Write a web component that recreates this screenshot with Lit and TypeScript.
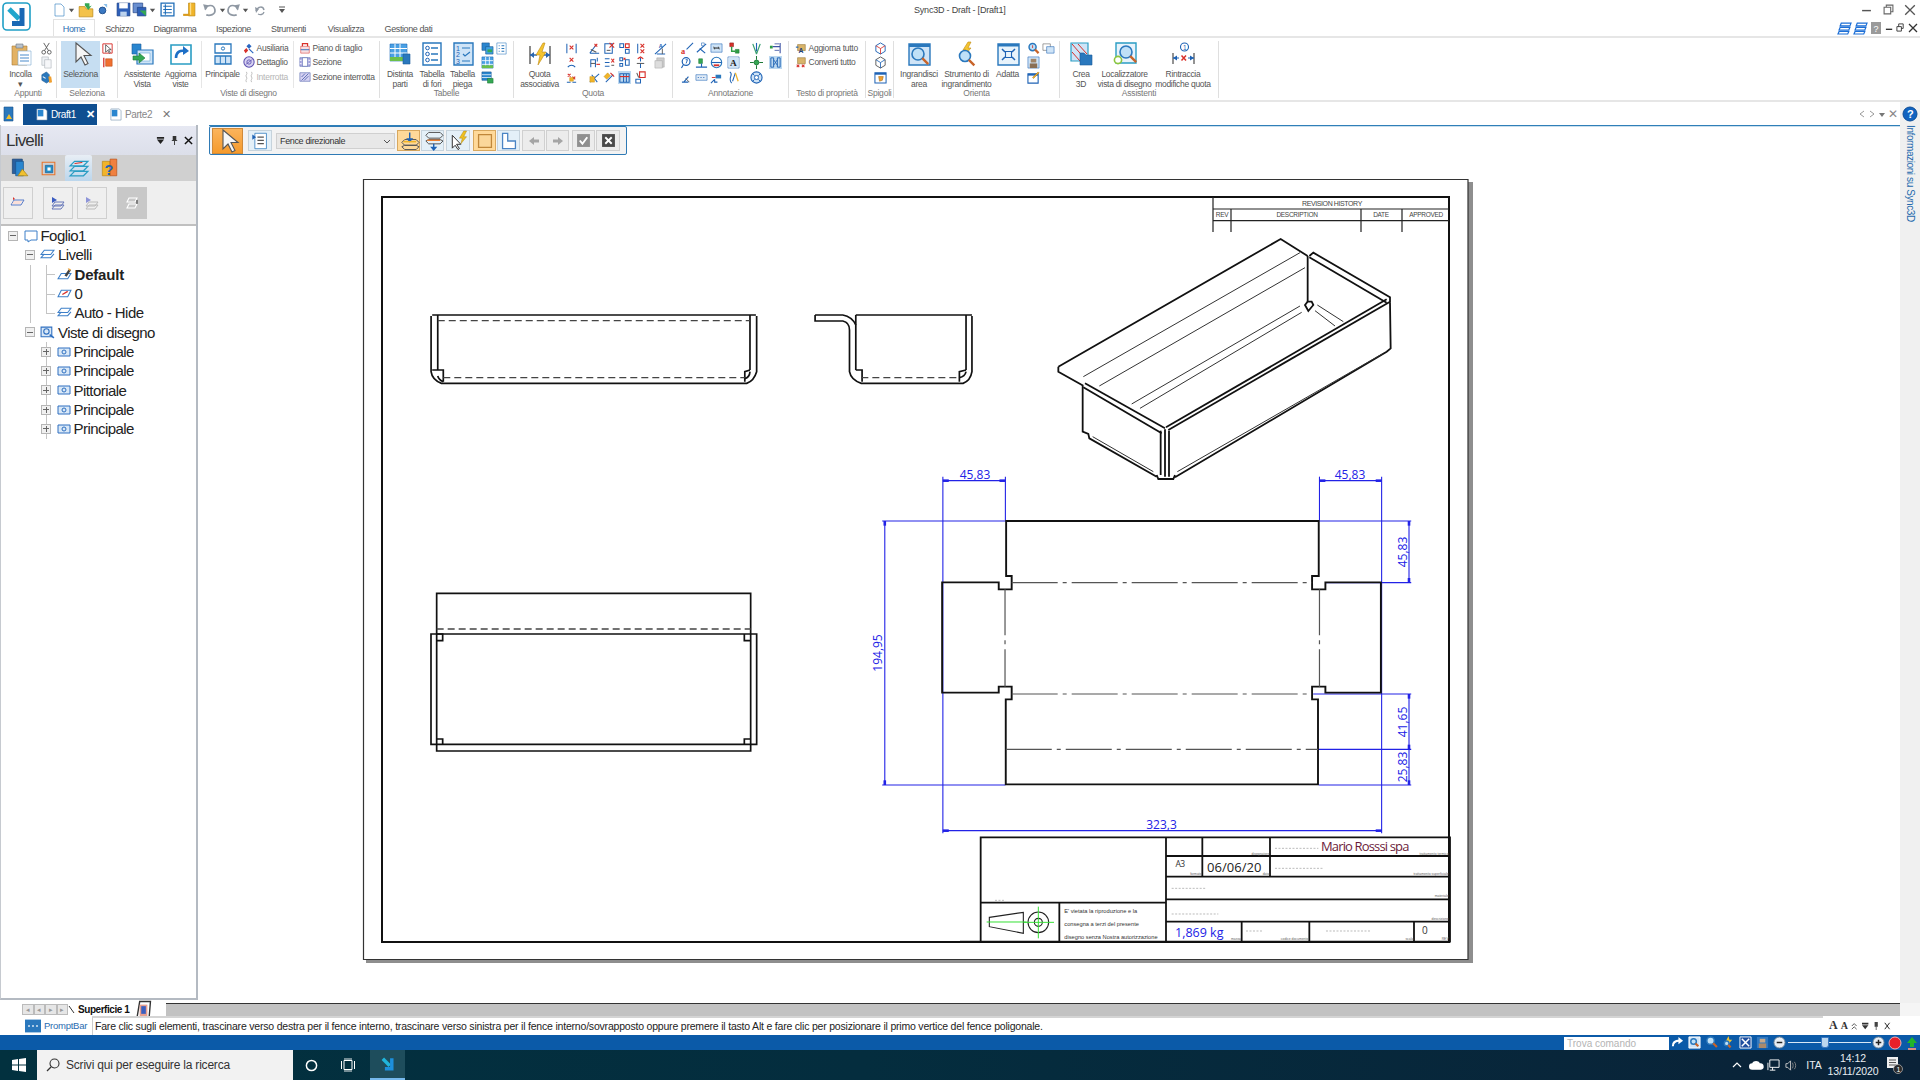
import { LitElement, html, css, svg } from 'lit';
import { customElement } from 'lit/decorators.js';

const B = '#1f63b5', R = '#d8302a', Y = '#f0b429', G = '#2f9e44', K = '#5a5a5a', LB = '#cfe4f7', W = '#ffffff', D = '#222222';
const st = (d: string, c = B, w = 1.1) => svg`<path d=${d} fill="none" stroke=${c} stroke-width=${w}/>`;
const fl = (d: string, c = B, s = 'none', w = 0.6) => svg`<path d=${d} fill=${c} stroke=${s} stroke-width=${w}/>`;
const ci = (x: number, y: number, r: number, f = 'none', s = B, w = 1) => svg`<circle cx=${x} cy=${y} r=${r} fill=${f} stroke=${s} stroke-width=${w}/>`;
const ic = (size: number, vb: number, parts: any) => html`<svg class="i" width=${size} height=${size} viewBox="0 0 ${vb} ${vb}">${parts}</svg>`;
const mag = (x: number, y: number, r: number) => [ci(x, y, r, '#bfe0f7', '#2a78bd', 1.6), st(`M${x + r * 0.7} ${y + r * 0.7}l${r} ${r}`, '#c8642a', 2.4)];

const BIG: Record<string, any> = {
  paste: [fl('M3 4h15v19H3z', '#e3b264', '#a97b35'), fl('M7 2h7v4H7z', '#b9c2cc', '#6d7680'), fl('M9 9h13v14H9z', W, '#7aa7d0'), st('M11 13h9M11 16h9M11 19h9', '#4a8ccc', 1.2)],
  cursor: [fl('M7 1l0 19 5-5 4 8 3-1.5-4-8h7z', '#f6f6f6', '#555', 1.1)],
  wizard: [fl('M2 2h9v10H2z', '#2a86cf', '#1b5d9c'), fl('M7 8h16v14H7z', LB, '#2a78bd', 1.2), fl('M10 11h10v8H10z', W, '#6aa7d8'), fl('M3 14h6v-3l6 5-6 5v-3H3z', '#35a853', '#1f7a38')],
  refresh: [fl('M2 3h20v19H2z', W, '#2a9dc4', 1.6), st('M7 16c0-6 4-8 9-7', '#1d6fc6', 2.6), fl('M14 4l6 5-6 4z', '#1d6fc6')],
  main: [fl('M4 2h16v9H4z', W, '#2a78bd', 1.3), ci(12, 6.5, 1.6, 'none', '#2a78bd', 1), fl('M4 14h16v8H4z', LB, '#2a78bd', 1.3), st('M9.3 14v8M14.6 14v8', '#2a78bd', 1)],
  bom: [fl('M2 2h17v17H2z', '#4aa0e4', '#1f6db8'), st('M2 6.5h17M2 11h17M7 2v17M12 2v17', W, 1), fl('M2 15h17v4H2z', '#6cc04a'), fl('M15 12h7v10h-7z', '#2a78bd', '#1b5d9c')],
  holes: [fl('M3 1h18v22H3z', W, '#2a78bd', 1.4), ci(7.5, 6, 1.8), ci(7.5, 12, 1.8), ci(7.5, 18, 1.8), st('M11 6h7M11 12h7M11 18h7', '#2a78bd', 1.4)],
  bend: [fl('M3 1h19v22H3z', '#cfe4f7', '#2a78bd', 1.4), svg`<text x="5" y="8.5" font-size="7" fill="#1f63b5" font-family="Liberation Sans">1</text><text x="5" y="15" font-size="7" fill="#1f63b5" font-family="Liberation Sans">2</text><text x="5" y="21.5" font-size="7" fill="#1f63b5" font-family="Liberation Sans">3</text>`, st('M11 6h8M12 12l2 2 5-4M11 19h8', '#2a78bd', 1.2)],
  assoc: [st('M2 4v18M22 4v18', K, 1.4), st('M2 13h7M15 13h7', '#2a66b0', 1.4), fl('M2 13l4-3v6zM22 13l-4-3v6z', '#2a66b0'), fl('M15 1L8 13h4l-2 10 8-13h-4l3-9z', '#f4c430', '#c08a10')],
  area: [fl('M2 2h21v21H2z', LB, '#2a78bd', 1.4), fl('M2 2h21v3H2z', '#2a78bd'), ...mag(11, 12, 6)],
  tool: [fl('M13 0L8 8h3l-2 6 7-8h-3l3-6z', '#f4c430', '#c08a10'), ...mag(10, 14, 5.5)],
  fit: [fl('M2 2h21v21H2z', '#e8f3fb', '#2a78bd', 1.4), fl('M2 2h21v2.5H2z', '#2a78bd'), st('M6 7l3 3M19 7l-3 3M6 18l3-3M19 18l-3-3', '#1f63b5', 1.5), fl('M9.5 9.5h6v6h-6z', 'none', '#1f63b5', 1.1)],
  c3d: [fl('M2 1h17v18H2z', LB, '#2a9dc4', 1.2), st('M3 2l14 16M3 10l8 9M9 2l9 10', R, 1), fl('M11 11h4l2 2h6v10H11z', '#2a78bd', '#1b5d9c')],
  locate: [fl('M3 1h20v20H3z', '#e8f3fb', '#2a9dc4', 1.4), ...mag(13, 10, 6), ci(5, 18, 3.6, W, '#8cc63f', 1.6)],
  retrace: [ci(13.5, 5, 4, W, '#1f63b5', 1.1), svg`<text x="12" y="7.6" font-size="6.5" fill="#1f63b5" font-family="Liberation Sans">1</text>`, st('M2 11v11M23 11v11', K, 1.3), st('M2 16h6M17 16h6', B, 1.2), fl('M2 16l4-2.5v5zM23 16l-4-2.5v5z', B), st('M10.5 13.5l4.5 5M15 13.5l-4.5 5', R, 1.5)],
};

const tri = (b = '', r = '', y = '', k = '') => [b ? st(b, B) : '', r ? st(r, R, 1.2) : '', y ? fl(y, Y, '#b98512', 0.4) : '', k ? st(k, K) : ''];
const SM: Record<string, any> = {
  cut: [st('M4 1l5 8M10 1L5 9', K, 1), ci(4, 11, 2, 'none', K), ci(10, 11, 2, 'none', K)],
  copy: [fl('M2 1h7v9H2z', '#eef1f4', '#a7adb5'), fl('M5 4h7v9H5z', '#f6f7f9', '#a7adb5')],
  brush: [fl('M2 4l5-3 3 3v7l-3 2-5-3z', '#2a78bd', '#17538c'), fl('M9 6h3l1 6-3 1z', '#f0a030'), st('M3 6l3 2', W)],
  selA: [st('M2 2h10v10H2z', R, 1), fl('M5 3l0 8 2-2 2 3 1-.7-2-3h3z', W, D, 0.7)],
  selB: [st('M3 2v10', R, 1.4), fl('M5 3h7v8H5z', '#f07030', '#b84a16')],
  aux: [fl('M4 5l3-3 3 3-3 3z', '#2a66c0'), fl('M1 10l3-3 2 3-3 3z', R), st('M7 8l5 5', '#2a66c0', 1.4)],
  det: [ci(7, 7, 6, '#d9d4f2', '#5b4fb0', 1.2), ci(7, 7, 2.5, 'none', '#5b4fb0', 1), st('M3 10l8-6', '#5b4fb0', .8)],
  brk: [st('M4 1c2 3-2 4 0 6s-2 3 0 6M10 1c2 3-2 4 0 6s-2 3 0 6', '#b5b5b5', 1)],
  plane: [fl('M2 5h10v8H2z', '#f6dfe2', R), st('M4 5V2h6v3', R, 1.4), st('M2 9h10', B, 1)],
  sect: [fl('M1 2h12v10H1z', '#b5b1e6', '#3f55a5'), fl('M4 2h6v10H4z', W, '#3f55a5'), st('M1 5h2M1 9h2M11 5h2M11 9h2', W)],
  brsec: [fl('M1 2h12v10H1z', '#d6d2f2', '#3f55a5'), st('M3 11l8-8M6 11l5-5M3 7l4-4', '#3f55a5', .9)],
  t1: [fl('M1 1h8v8H1z', '#2a86cf', '#17538c'), fl('M5 5h8v8H5z', '#3fa0e0', '#17538c'), fl('M7 8l5 0 0 3-5 0z', '#35a853')],
  t2: [fl('M2 1h10v12H2z', W, '#2a78bd'), st('M4 4h1M7 4h3M4 7h1M7 7h3M4 10h1M7 10h3', '#2a78bd', 1.1)],
  t3: [fl('M1 1h12v12H1z', '#4aa0e4', '#1f6db8'), st('M1 5h12M1 9h12M5 1v12M9 1v12', W, .9), fl('M1 10h12v3H1z', '#6cc04a')],
  t4: [fl('M1 1h10v9H1z', '#2a86cf', '#17538c'), st('M1 4h10M1 7h10', W, .8), fl('M7 8h6v5H7z', '#35a853', '#1f7a38')],
  q1: tri('M2 2v10M12 2v10', 'M5 4l4 4M9 4L5 8'),
  q2: tri('M3 12a5 5 0 0 1 8 0', 'M5 2l4 4M9 2L5 6'),
  q3: tri('M2 12h4M8 12h4', 'M3 3l3 3M6 3L3 6M8 6l3 3M11 6L8 9', 'M5 7h4v4H5z'),
  q4: tri('M2 12h10M2 12L8 4', 'M7 2l3 3M10 2L7 5', '', 'M3 8l6 3'),
  q5: tri('M3 12V4h5v8M10 2v4', 'M9 9h4', '', 'M3 8h5'),
  q6: tri('M2 12L12 3M4 4l6 8', '', 'M2 6l5 0 0 6-5 0z'),
  q7: tri('M2 2h8v10H2z', 'M7 1l5 5M12 1L7 6', '', 'M4 9h4'),
  q8: tri('M2 3h5M2 7h5M2 11h5', 'M9 3l3 4M12 3L9 7', '', 'M9 10h3'),
  q9: tri('M3 12L11 4', 'M8 2l4 4', 'M1 6l4-4 3 3-4 4z'),
  q10: tri('M2 2h4v4H2zM8 8h4v4H8z', 'M8 2h4v4H8z'),
  q11: tri('M2 2h3v3H2zM2 8h3v3H2zM8 4h4v6H8z', 'M6 2l2 2M8 2L6 4'),
  q12: [fl('M0 0h14v14H0z', '#bcd8f0'), ...tri('M2 3h10v9H2zM6 3v9M9 3v9', 'M2 6h10')],
  q13: tri('M4 2v10', 'M7 2l4 4M11 2L7 6M7 8l4 4M11 8l-4 4'),
  q14: tri('M2 9h5v4H2z', 'M6 1h6v6H6z', '', 'M3 2l2 5'),
  q16: tri('M7 2v4M7 8v5', 'M4 3l3-2 3 2', '', 'M3 8h8'),
  aa: [svg`<text x="5" y="6" font-size="6" fill="#1f63b5" font-family="Liberation Sans" font-weight="700">A</text>`, st('M1 13L13 2M3 13h9', B, 1.1), st('M9 7v6', K, 1)],
  ab: [fl('M3 2h8v10H3z', '#ccc', '#aaa'), fl('M1 5h8v8H1z', '#ddd', '#aaa')],
  a1: [svg`<text x="0" y="13" font-size="9" fill="#d8302a" font-family="Liberation Serif" font-weight="700">a</text>`, st('M6 8l7-7', B, 1.2)],
  a2: [ci(5.5, 6, 4.2, W, B, 1.3), st('M2.5 9.5L0.5 13', B, 1.2), st('M5 4h2l-1.5 4', B, 1)],
  a3: [st('M1 12h7M3 12l5-6', B, 1.2), st('M5 8l4 4', K, 1)],
  a4: [st('M2 11L12 2M5 7l6 5', B, 1.2), fl('M7 1h3v3H7z', W, B)],
  a5: [fl('M4 3h4v5H4z', '#35a853', '#1f7a38'), st('M1 12h12M7 8v4', B, 1.2)],
  a6: [st('M1 13l4-4M5 9v3h3', B, 1.2), fl('M6 4l6 0 0 4-6 0z', '#2a78bd'), st('M2 7h4', R, 1)],
  a7: [fl('M1 2h12v9H1z', LB, B), st('M4 6.5h6', D, 1.1), st('M4 5l1 3M9 5l1 3', D, .7)],
  a8: [ci(7, 7, 5.6, W, '#2a78bd', 1.2), st('M1.5 7h11', B, 1.2), fl('M4 9h6v2H4z', R)],
  a9: [fl('M1 4h12v6H1z', '#dfeaf6', B), st('M3 7h1M6 7h1M9 7h1', B, 1.2)],
  a10: [fl('M3 1h4v4H3z', R, '#8e1e1a'), st('M5 5v5h4', G, 1.5), fl('M9 8h4v4H9z', G, '#1f7a38')],
  a11: [fl('M1 1h12v12H1z', W, B), fl('M2 2h10v10H2z', LB), svg`<text x="3.2" y="11" font-size="10" fill="#222" font-family="Liberation Serif" font-weight="700">A</text>`],
  a12: [st('M3 2l4 11M11 2l-4 11', '#3aa070', 1.3), st('M7 1v9', B, 1.2)],
  a13: [ci(7, 7, 2.6, '#35a853', '#1f7a38'), st('M7 0v4M7 10v4M0 7h4M10 7h4', '#1f7a38', 1.1)],
  a14: [st('M3 1c5 3-3 6 2 12M9 2l-3 9', B, 1.1), st('M9 2l3 9', Y, 1.4)],
  a15: [ci(7, 7, 6, LB, B, 1.2), ci(7, 7, 2.2, W, B, 1), st('M3 3l2 2M11 3L9 5M3 11l2-2M11 11L9 9', B, 1)],
  a16: [fl('M1 4h3v3H1z', G), st('M4 5h8M12 1v11', '#3f55a5', 1.2), st('M6 2h5M6 9h5', '#3f55a5', .9)],
  a17: [fl('M0 0h14v14H0z', '#bcd8f0'), st('M2 2h3v10H2zM9 2h3v10H9z', '#1f63b5', 1), st('M5 4l4 6M9 4l-4 6', '#1f63b5', .9)],
  p1: [fl('M3 3h9v7H3z', '#d9b46a', '#8c6a28'), svg`<text x="4" y="13" font-size="8" fill="#1f3f78" font-family="Liberation Sans" font-weight="700">A</text>`, st('M1 6h3', B, 1.3)],
  p2: [fl('M3 2h9v7H3z', '#d9b46a', '#8c6a28'), st('M2 10l3 3M5 10l-3 3', R, 1.2), st('M8 10l3 3M11 10l-3 3', R, 1.2)],
  e1: [st('M7 1l5 3v6l-5 3-5-3V4z', B, 1), st('M2 4l5 3 5-3M7 7v6', R, .9)],
  e2: [st('M7 1l5 3v6l-5 3-5-3V4z', K, 1), st('M2 4l5 3 5-3M7 7v6', B, .9)],
  e3: [fl('M1 2h12v11H1z', W, B, 1.1), fl('M1 2h12v2H1z', B), fl('M5 6l5 0-1 4-3 1z', '#f0a030', '#a86a10')],
  o1: [...mag(6, 5.5, 3.8), st('M6 3.5v3', R, .9)],
  o2: [fl('M1 2h8v7H1z', W, K), fl('M5 5h8v7H5z', LB, B)],
  o3: [fl('M1 1h12v12H1z', LB, B), fl('M4 3h6v4H4z', '#a08468'), fl('M3 8h8v5H3z', '#8a6f55')],
  o4: [fl('M1 3h11v10H1z', W, B, 1.2), fl('M1 3h11v2H1z', B), fl('M6 7l6-6 1 1-6 6z', Y, '#a86a10')],
};

type Col = any;
const big = (w: number, icon: string, lines: string[], sel = false, s = 24) => ({ t: 'big', w, icon, lines, sel, s });
const sm = (w: number, ...icons: string[]) => ({ t: 'small', w, icons });
const list = (w: number, items: any[], pad = 0) => ({ t: 'list', w, items, pad });
const sp = (w: number, line = false) => ({ t: 'sp', w, line });

const GROUPS: { w: number; label: string; cols: Col[] }[] = [
  { w: 57, label: 'Appunti', cols: [sp(2), big(37, 'paste', ['Incolla', '▾']), sm(14, 'cut', 'copy', 'brush')] },
  { w: 61, label: 'Seleziona', cols: [sp(4), big(39, 'cursor', ['Seleziona'], true), sm(14, 'selA', 'selB')] },
  {
    w: 262, label: 'Viste di disegno', cols: [
      big(48, 'wizard', ['Assistente', 'Vista']), big(29, 'refresh', ['Aggiorna', 'viste']), sp(7, true),
      big(41, 'main', ['Principale']),
      list(50, [['aux', 'Ausiliaria'], ['det', 'Dettaglio'], ['brk', 'Interrotta', true]]),
      sp(1, true), list(86, [['plane', 'Piano di taglio'], ['sect', 'Sezione'], ['brsec', 'Sezione interrotta']], 5),
    ],
  },
  { w: 134, label: 'Tabelle', cols: [big(40, 'bom', ['Distinta', 'parti']), big(24, 'holes', ['Tabella', 'di fori']), big(37, 'bend', ['Tabella', 'piega']), sm(13, 't1', 't3', 't4'), sm(14, 't2')] },
  {
    w: 159, label: 'Quota', cols: [
      big(51, 'assoc', ['Quota', 'associativa']), sm(13, 'q1', 'q2', 'q3'), sp(8), sm(16, 'q4', 'q5', 'q6'),
      sm(15, 'q7', 'q8', 'q9'), sm(15, 'q10', 'q11', 'q12'), sm(17, 'q13', 'q16', 'q14'), sm(23, 'aa', 'ab'),
    ],
  },
  {
    w: 116, label: 'Annotazione', cols: [
      sp(6), sm(16, 'a1', 'a2', 'a3'), sm(13, 'a4', 'a5', 'a9'), sm(17, 'a7', 'a8', 'a6'), sm(16, 'a10', 'a11', 'a14'),
      sp(5), sm(20, 'a12', 'a13', 'a15'), sm(19, 'a16', 'a17'),
    ],
  },
  { w: 77, label: 'Testo di proprietà', cols: [list(76, [['p1', 'Aggiorna tutto'], ['p2', 'Converti tutto']], 6)] },
  { w: 28, label: 'Spigoli', cols: [sp(7), sm(14, 'e1', 'e2', 'e3')] },
  {
    w: 166, label: 'Orienta', cols: [
      big(50, 'area', ['Ingrandisci', 'area']), big(45, 'tool', ['Strumento di', 'ingrandimento']), big(37, 'fit', ['Adatta']),
      sm(15, 'o1', 'o3', 'o4'), sm(15, 'o2'),
    ],
  },
  { w: 159, label: 'Assistenti', cols: [big(42, 'c3d', ['Crea', '3D']), big(45, 'locate', ['Localizzatore', 'vista di disegno']), big(72, 'retrace', ['Rintraccia', 'modifiche quota'])] },
];

const TABS: [string, number][] = [['Schizzo', 49], ['Diagramma', 62], ['Ispezione', 55], ['Strumenti', 55], ['Visualizza', 60], ['Gestione dati', 65]];
const caret = ic(7, 8, fl('M1 3h6L4 7z', '#555'));
const QAT: [number, any][] = [
  [12, ic(14, 14, fl('M3 1h6l3 3v9H3z', W, '#2a78bd'))], [12, caret],
  [18, ic(16, 14, [fl('M1 4h5l1 2h6v7H1z', '#f3c24a', '#b98512'), fl('M6 1h4v3l2-1-3 4-3-4h0z', '#35a853')])],
  [14, ic(13, 14, [ci(7, 8, 3.6, '#3a78c2', '#1f4f8c'), fl('M8 1l4 0 0 4z', '#8cc0ea')])], [6, ''],
  [16, ic(15, 14, [fl('M1 1h12v12H1z', '#2d5fb8', '#1c3f80'), fl('M3 1h8v5H3z', W), fl('M4 9h6v4H4z', '#bcd3ee')])],
  [16, ic(15, 14, [fl('M1 1h9v9H1z', '#6a8fd0', '#1c3f80'), fl('M5 5h8v8H5z', '#2d5fb8', '#1c3f80'), fl('M7 8l6 0 0 5z', '#35a853')])], [10, caret],
  [20, ic(15, 14, [fl('M1 1h12v12H1z', W, '#1f6db8', 1.2), st('M3 4h8M3 7h8M3 10h8M5 2v10', '#1f6db8', 1)])],
  [22, ic(15, 14, [fl('M7 1h6v12H7z', '#f0b429', '#b98512'), fl('M2 11h6v2H2z', '#d99a1c'), st('M9 1v11', '#fde29a', 1)])],
  [20, ic(15, 14, [st('M3 7c2-5 8-5 9 0s-5 6-8 5', '#8f98a3', 1.6), fl('M1 2l5 1-3 5z', '#8f98a3')])], [6, caret],
  [16, ic(15, 14, [st('M11 7C9 2 3 2 2 7s5 6 8 5', '#8f98a3', 1.6), fl('M13 2l-5 1 3 5z', '#8f98a3')])], [8, caret],
  [22, ic(14, 14, [st('M3 8c2-5 7-5 8-1', '#8f98a3', 1.5), st('M5 11c2 1 5 1 6-2', '#8f98a3', 1.3), fl('M2 4l4 2-3 4z', '#8f98a3')])], [22, ic(8, 8, [st('M1 1h6', '#555', 1), fl('M1 3h6L4 7z', '#555')])],
];
const WIN1: [number, any][] = [
  [22, ic(11, 10, st('M1 6h8', '#555', 1.3))],
  [22, ic(11, 10, st('M1 3h6v6H1zM3 3V1h6v6H7', '#666', 1))],
  [21, ic(12, 10, st('M1 1l8 8M9 1L1 9', '#555', 1.1))],
];
const stack = [st('M3 2h9l-1 2.5H2zM2 5.8h9l-1 2.5H1zM1 9.6h9L9 12H0z', '#1d6fd6', 1.1)];
const WIN2: [number, any][] = [
  [16, ic(13, 12, stack)], [16, ic(13, 12, stack)],
  [15, ic(12, 12, [fl('M1 0h10v12H1z', '#9a9a9a'), svg`<text x="3.5" y="9.5" font-size="9" fill="#fff" font-family="Liberation Sans">?</text>`])],
  [12, ic(9, 10, st('M1 7h7', '#333', 1.5))],
  [11, ic(9, 10, st('M1 4h5v5H1zM3 4V1h5v5H6', '#333', 1))],
  [14, ic(10, 10, st('M1 1l8 8M9 1L1 9', '#333', 1.3))],
];

const doc = (a: string) => [fl('M2 1h9l2 2v10H2z', W, '#6d8ca8'), fl('M3 2h6v7H3z', a)];
const TI: Record<string, any> = {
  sheet: ic(14, 14, [fl('M1 2h12v9H7l-3 2v-2H1z', W, '#3d7fc8', 1)]),
  layer: ic(15, 14, [st('M4 3h9l-3 4H1zM4 6.5L1 10h9l3-3.5', '#3d7fc8', 1)]),
  pen: ic(15, 14, [st('M4 6h9l-3 5H1z', '#3d7fc8', 1), fl('M7 8l4-6 2 1-4 6z', '#444'), fl('M10 1l3 1-1 2z', '#f0a030')]),
  red: ic(15, 14, [st('M4 4h9l-3 6H1z', '#3d7fc8', 1), st('M5 8l5-3', R, 1.2)]),
  view: ic(14, 14, [fl('M1 3h12v8H1z', '#d9e8f7', '#2e6fc0', 1), ci(7, 7, 2, 'none', '#2e6fc0', 1)]),
  views: ic(15, 14, [fl('M1 2h10v9H1z', '#d9e8f7', '#2e6fc0', 1), ci(6, 6, 2.5, 'none', '#2e6fc0', 1), st('M9 9l4 3', '#2e6fc0', 1.4)]),
};

const FENCE: any[] = [
  ['sel2', 31, ic(24, 24, BIG.cursor), 'on'],
  ['g', 5], ['b', 24, ic(18, 14, [fl('M3 1h9v12H3z', W, '#2a78bd'), st('M5 4h5M5 6.5h5M5 9h5', '#555', .9), fl('M1 2l3 2-3 2z', '#1f63b5')])],
  ['g', 4], ['c', 119], ['g', 2],
  ['b', 23, ic(20, 14, [st('M2 8l2-2h8l2 2-2 2H4zM2 11l2-1h8l2 1-2 2H4z', '#555', .7), fl('M7 1h1v4h2L7.5 8 5 5h2z', '#1f63b5'), fl('M3 7h9v1H3z', Y)]), 'soft'], ['g', 1],
  ['b', 23, ic(20, 14, [st('M2 3l2-2h8l2 2-2 2H4zM2 7l2-1h8l2 1-2 2H4z', '#555', .7), fl('M7 9h1v2h2l-2.5 3L5 11h2z', '#1f63b5'), fl('M3 6h9v1H3z', '#f08030')])], ['g', 2],
  ['b', 24, ic(20, 14, [fl('M3 3v9l2-2 2 3 1-.7-2-3h3z', W, '#333', .7), fl('M11 0l-3 5h2l-1 4 4-5h-2l2-4z', '#f0c020', '#a07c10', .3)])], ['g', 3],
  ['b', 23, ic(18, 14, [fl('M2 2h10v10H2z', '#fbd79a', '#c0873a', 1)]), 'soft'], ['g', 1],
  ['b', 23, ic(18, 14, [fl('M2 1h4v6h6v6H2z', W, '#4a84c4', 1)])], ['g', 2],
  ['b', 23, ic(14, 14, fl('M2 7l5-4v2.5h5v3H7V11z', '#a5a5a5')), 'off'], ['g', 1],
  ['b', 23, ic(14, 14, fl('M12 7L7 3v2.5H2v3h5V11z', '#a5a5a5')), 'off'], ['g', 3],
  ['b', 23, ic(15, 14, [fl('M1 1h12v12H1z', '#8f8f8f'), st('M3.5 7l2.5 3 4.5-6', W, 1.8)]), 'off'], ['g', 1],
  ['b', 24, ic(15, 14, [fl('M1 1h12v12H1z', '#4a4a4a'), st('M4 4l6 6M10 4l-6 6', W, 1.8)]), 'off'],
];

const ISO_H = ['M55 560L722 177L803 228', 'M803 228V365', 'M803 365L795 375L805 393L820 375L815 365Z', 'M808 228L820 218L1050 352V368', 'M808 232L1040 368', 'M1050 365L385 750', 'M1040 358L378 742', 'M1050 368L1052 505L1040 515L405 892', 'M55 560V575L130 617', 'M135 610L375 745', 'M130 622L365 760', 'M128 617V755L145 762L148 775L350 890', 'M362 752V885', 'M375 748V890', 'M387 752V890', 'M350 885L355 897H400L405 885'];
const ISO_L = ['M130 590L780 218', 'M178 618L795 263', 'M275 672L780 378', 'M300 685L785 397', 'M832 375L910 425', 'M825 392L885 438', 'M158 770L340 875', 'M412 875L1030 520'];
const FLAT = 'M395 183H1240V348H1222V388H1258V367H1408V698H1258V680H1222V718H1238V973H394V718H410V680H375V698H222V367H375V388H410V348H395Z';
const CENTER = ['M410 368H1222', 'M410 702H1222', 'M394 868H1238', 'M392 388V680', 'M1242 388V680'];
const DIM = ['M224 50V1120', 'M393 50V180', 'M224 62H393', 'M1242 50V180', 'M1410 50V1120', 'M1242 62H1410', 'M60 183H395', 'M60 975H393', 'M67 183V975', 'M1240 183H1490', 'M1258 368H1490', 'M1484 183V368', 'M1225 702H1490', 'M1240 868H1490', 'M1240 975H1490', 'M1484 702V975', 'M224 1112H1410'];
const DIM_A = [[224, 62, 1, 0], [393, 62, -1, 0], [1242, 62, 1, 0], [1410, 62, -1, 0], [67, 183, 0, 1], [67, 975, 0, -1], [1484, 183, 0, 1], [1484, 368, 0, -1], [1484, 702, 0, 1], [1484, 868, 0, -1], [1484, 975, 0, -1], [224, 1112, 1, 0], [1410, 1112, -1, 0]];
const SIDE = ['M60 75H935', 'M57 78V245Q60 270 85 280H910Q930 272 937 245V78', 'M75 75V240', 'M919 75V240', 'M60 240H90V275', 'M919 240L905 245V275', 'M75 258Q78 270 90 275', 'M919 245Q918 262 905 266', 'M1095 75H1170Q1195 80 1205 105', 'M1095 75V93H1170Q1188 97 1188 120V245Q1192 270 1220 280H1495Q1515 272 1519 245V78', 'M1205 75H1519', 'M1205 75V240', 'M1503 75V240', 'M1205 240H1222V275', 'M1503 240L1485 245V275', 'M1503 245Q1500 260 1485 263'];
const BOTTOM = ['M50 40H992V513H50Z', 'M33 162H1010V493H33Z', 'M50 162H68V182H50', 'M973 162V182H992', 'M50 477H68V493', 'M973 493V477H992'];
const TB_H = ['M62 248H618', 'M618 108H1470', 'M618 170H1470', 'M618 238H1470', 'M618 305H1470', 'M618 52V365', 'M727 52V170', 'M930 52V170', 'M298 248V365', 'M845 305V365', 'M1048 305V365', 'M1362 305V365', 'M62 52H1470V365H62Z', 'M0 365H62'];
const TB_DOT = ['M945 85H1075', 'M945 145H1090', 'M635 205H740', 'M635 282H775', 'M858 333H908', 'M1098 333H1230', 'M105 241H132'];
const TB_LAB: [number, number, string][] = [[928, 105, 'disegnatore'], [1466, 105, 'trattamento termico'], [725, 166, 'formato'], [928, 166, 'data'], [1466, 166, 'trattamento superficiale'], [1466, 232, 'materiale'], [1466, 300, 'descrizione'], [843, 361, 'massa'], [1045, 361, 'codice documento'], [1360, 361, 'scala'], [1466, 361, 'REV']];

@customElement('app-root')
export class AppRoot extends LitElement {
  static styles = css`
    :host { display: block; width: 1920px; height: 1080px; overflow: hidden; background: #fff; font-family: "Liberation Sans", Arial, sans-serif; color: #444; }
    .app { display: flex; flex-direction: column; width: 1920px; height: 1080px; }
    svg.i { display: block; flex: none; overflow: visible; }
    .top { display: grid; grid-template-columns: 53px 1fr; height: 36px; }
    .logo { padding: 2px 0 0 2px; }
    .toprows { display: flex; flex-direction: column; min-width: 0; }
    .row1 { display: flex; align-items: center; height: 19px; }
    .cell { display: flex; align-items: center; justify-content: center; flex: none; }
    .title { margin-left: 621px; font-size: 9px; letter-spacing: -.2px; color: #444; white-space: nowrap; }
    .ctrl { display: flex; margin-left: auto; }
    .row2 { display: flex; align-items: stretch; height: 17px; }
    .tab { display: flex; align-items: center; justify-content: center; flex: none; font-size: 9px; letter-spacing: -.4px; color: #555; padding-top: 2px; box-sizing: border-box; }
    .tab.on { color: #2a6db0; background: #fff; border: 1px solid #e2e2e2; border-bottom: 0; }
    .ribbon { display: flex; flex: none; height: 66px; border-top: 2px solid #e6e6e6; border-bottom: 2px solid #e6e6e6; padding-top: 3px; box-sizing: border-box; }
    .group { display: flex; flex-direction: column; flex: none; box-sizing: border-box; height: 57px; border-right: 1px solid #dfdfdf; }
    .cols { display: flex; height: 47px; }
    .glabel { height: 10px; line-height: 10px; font-size: 8.5px; letter-spacing: -.2px; color: #777; text-align: center; white-space: nowrap; }
    .big { display: flex; flex-direction: column; align-items: center; flex: none; padding-top: 1px; box-sizing: border-box; font-size: 8.5px; letter-spacing: -.3px; line-height: 10px; color: #555; white-space: nowrap; }
    .big.sel { background: #c6def2; }
    .big .tx { margin-top: 3px; display: flex; flex-direction: column; align-items: center; }
    .small { display: flex; flex-direction: column; align-items: center; flex: none; }
    .small .r { height: 14.5px; display: flex; align-items: center; }
    .list { display: flex; flex-direction: column; flex: none; box-sizing: border-box; font-size: 8.5px; letter-spacing: -.25px; color: #555; white-space: nowrap; }
    .list .r { height: 14.3px; display: flex; align-items: center; gap: 1.5px; }
    .list .dim { color: #b5b5b5; }
    .vsep { border-right: 1px solid #e6e6e6; box-sizing: border-box; height: 47px; flex: none; }
    .doctabs { display: flex; align-items: stretch; height: 23px; flex: none; }
    .dicon { width: 23px; display: flex; align-items: center; padding-left: 2px; box-sizing: border-box; flex: none; }
    .dtab { display: flex; align-items: center; flex: none; box-sizing: border-box; font-size: 10px; letter-spacing: -.4px; gap: 3px; }
    .dtab.on { width: 74px; background: #0f4f91; color: #fff; padding-left: 12px; margin-top: 2px; }
    .dtab.off { width: 75px; color: #888; padding-left: 12px; margin-top: 2px; }
    .dx { font-size: 11px; font-weight: 700; margin-left: 7px; letter-spacing: 0; }
    .dtab.off .dx { font-weight: 400; color: #777; margin-left: 7px; }
    .dright { display: flex; align-items: center; margin-left: auto; gap: 2px; color: #888; font-size: 12px; padding-right: 2px; }
    .helpc { width: 20px; background: #f0f0f0; display: flex; align-items: center; justify-content: center; flex: none; }
    .work { display: flex; height: 878px; flex: none; }
    .panel { width: 198px; flex: none; display: flex; flex-direction: column; height: 875px; box-sizing: border-box; border-right: 2px solid #b4bac2; border-bottom: 2px solid #b4bac2; border-left: 1px solid #c6cad0; background: #fff; }
    .phead { height: 29px; display: flex; align-items: center; background: linear-gradient(#e6e8f2, #dcdfea); padding-left: 5px; font-size: 17px; letter-spacing: -.8px; color: #333; flex: none; margin-top: 1px; }
    .pctl { margin-left: auto; display: flex; gap: 5px; padding-right: 3px; align-items: center; }
    .ptabs { height: 26px; background: #d0d0d0; display: flex; align-items: center; flex: none; padding-left: 4px; }
    .ptab { width: 27px; height: 26px; display: flex; align-items: center; justify-content: center; flex: none; margin-right: 3px; }
    .ptab.on { background: linear-gradient(#e8eef5, #bcd6ec); border-radius: 2px 2px 0 0; }
    .ptools { height: 43px; background: #efefef; display: flex; align-items: center; gap: 4px; padding-left: 2px; flex: none; border-bottom: 2px solid #c0c0c0; }
    .ptool { width: 30px; height: 32px; border: 1px solid #cfcfcf; box-sizing: border-box; display: flex; align-items: center; justify-content: center; flex: none; }
    .ptool.g { background: #c8c8c8; margin-left: 6px; }
    .ptool.s { margin-right: 6px; }
    .tree { flex: 1; padding: 0 0 0 4px; font-size: 15px; letter-spacing: -.55px; color: #222; background: #fff; }
    .tr { height: 19.33px; display: flex; align-items: center; white-space: nowrap; }
    .cw { width: 16.5px; height: 100%; flex: none; position: relative; display: flex; align-items: center; justify-content: center; }
    .cw.v::before, .cw.l::before, .cw.e::before, .cw.xv::before { content: ""; position: absolute; left: 8px; top: 0; bottom: 0; border-left: 1px solid #c4c4c4; }
    .cw.e::before { bottom: 50%; }
    .cw.l::after, .cw.e::after { content: ""; position: absolute; left: 8px; right: 0; top: 50%; border-top: 1px solid #c4c4c4; }
    .box { width: 10px; height: 10px; border: 1px solid #b5b5b5; background: #f0f0f0; box-sizing: border-box; position: relative; z-index: 1; display: flex; align-items: center; justify-content: center; }
    .box::before { content: ""; width: 6px; border-top: 1px solid #666; position: absolute; }
    .box.p::after { content: ""; height: 6px; border-left: 1px solid #666; position: absolute; }
    .tr .ti { margin-left: 2px; margin-right: 3px; flex: none; }
    .tr b { letter-spacing: -.2px; }
    .canvas { flex: 1; position: relative; min-width: 0; }
    .draw { display: block; }
    .draw * { vector-effect: non-scaling-stroke; }
    .fence { position: absolute; left: 11px; top: 1px; width: 418px; height: 29px; box-sizing: border-box; background: #f3f3f3; border: 1px solid #2f7ab5; border-radius: 2px; display: flex; align-items: center; padding-left: 2px; }
    .fb { height: 21px; display: flex; align-items: center; justify-content: center; flex: none; box-sizing: border-box; background: #e4f0f8; border: 1px solid #c6d3dc; }
    .fb.on { height: 26px; background: linear-gradient(#fbb45c, #f59a2c); border-color: #d08a3a; }
    .fb.soft { background: #ffd999; border-color: #d8a85e; }
    .fb.off { background: #ececec; border-color: #d0d0d0; }
    .combo { width: 119px; height: 16px; flex: none; box-sizing: border-box; background: #e8e8e8; border: 1px solid #d0d0d0; font-size: 9px; letter-spacing: -.35px; color: #333; display: flex; align-items: center; padding: 0 3px; justify-content: space-between; }
    .rail { width: 20px; flex: none; background: #f0f0f0; display: flex; justify-content: center; }
    .railt { writing-mode: vertical-rl; font-size: 10px; letter-spacing: -.4px; color: #2469ad; height: 100px; white-space: nowrap; }
    .sheets { display: flex; height: 13px; flex: none; }
    .sl { width: 166px; display: flex; align-items: center; flex: none; padding-left: 22px; box-sizing: border-box; }
    .nav { width: 11.5px; height: 11px; background: #e6e6e6; border: 1px solid #bbb; box-sizing: border-box; font-size: 7px; line-height: 9px; text-align: center; color: #999; flex: none; }
    .st { font-size: 10px; font-weight: 700; letter-spacing: -.45px; color: #111; margin: 0 3px; white-space: nowrap; }
    .sr { flex: 1; background: #c2c2c2; border-top: 1px solid #333; box-sizing: border-box; }
    .se { width: 20px; flex: none; background: #f5f5f5; }
    .prompt { display: flex; height: 19px; flex: none; align-items: center; background: #fff; }
    .pb { width: 92px; flex: none; display: flex; align-items: center; padding-left: 25px; box-sizing: border-box; color: #2a6db0; font-size: 9.5px; letter-spacing: -.25px; gap: 3px; white-space: nowrap; }
    .pf { width: 1731px; flex: none; height: 100%; box-sizing: border-box; border-top: 2px solid #d4d4d4; border-left: 1px solid #ccc; padding-left: 2px; font-size: 10.5px; line-height: 16px; color: #222; white-space: nowrap; overflow: hidden; letter-spacing: -.2px; }
    .pr { flex: 1; display: flex; align-items: center; justify-content: flex-start; gap: 3px; padding-left: 6px; font-size: 11px; color: #333; }
    .status { height: 15px; flex: none; background: #0b5aa8; display: flex; justify-content: flex-end; align-items: stretch; }
    .find { width: 105px; flex: none; background: #fff; color: #b4b4b4; font-size: 10px; line-height: 13px; padding-left: 3px; box-sizing: border-box; margin-top: 2px; }
    .sc { width: 17px; flex: none; display: flex; align-items: center; justify-content: center; }
    .slider { width: 83px; flex: none; position: relative; display: flex; align-items: center; }
    .slider::before { content: ""; width: 100%; border-top: 1px solid #d8e8f6; }
    .thumb { position: absolute; left: 33px; top: 2px; width: 8px; height: 11px; background: #bcd7ee; border: 1px solid #3a78c2; box-sizing: border-box; border-radius: 1px 1px 3px 3px; }
    .task { height: 30px; flex: none; display: flex; align-items: stretch; background: linear-gradient(90deg, #02313f, #042d3e 45%, #0a2238); color: #fff; }
    .winb { width: 37px; flex: none; display: flex; align-items: center; justify-content: center; }
    .search { width: 256px; flex: none; background: #f2f2f2; display: flex; align-items: center; gap: 6px; padding-left: 9px; box-sizing: border-box; color: #333; font-size: 12px; letter-spacing: -.2px; white-space: nowrap; }
    .tk { flex: none; display: flex; align-items: center; justify-content: center; }
    .tkapp { width: 35px; flex: none; display: flex; align-items: center; justify-content: center; background: #1e4d5c; border-bottom: 2px solid #76b9ed; box-sizing: border-box; margin-left: 5px; }
    .tray { margin-left: auto; display: flex; align-items: stretch; font-size: 10.5px; color: #e8eef2; }
    .clock { width: 50px; flex: none; display: flex; flex-direction: column; align-items: center; justify-content: center; line-height: 13px; letter-spacing: -.1px; white-space: nowrap; }
  `;

  private draw() {
    return svg`
      <rect x="1468" y="182" width="5" height="781" fill="#8e8e8e"/>
      <rect x="366" y="959" width="1107" height="4" fill="#8e8e8e"/>
      <rect x="363.5" y="179.5" width="1104.5" height="780" fill="#fff" stroke="#333" stroke-width="1.2"/>
      <rect x="382" y="197" width="1067" height="745" fill="none" stroke="#111" stroke-width="2"/>
      <path d="M209 125.5H1900" stroke="#2f7fb8" stroke-width="1.5"/>

      <path d="M1213 197V232M1231 209V232M1361 209V232M1402 209V232M1213 209H1449M1213 220.7H1449" fill="none" stroke="#222" stroke-width="1.2"/>
      <g font-family="Liberation Sans" fill="#444" text-anchor="middle">
        <text x="1332" y="205.5" font-size="7" letter-spacing="-.4">REVISION HISTORY</text>
        <text x="1222" y="217" font-size="6.5" letter-spacing="-.3">REV</text>
        <text x="1297" y="217" font-size="6.5" letter-spacing="-.3">DESCRIPTION</text>
        <text x="1381" y="217" font-size="6.5" letter-spacing="-.3">DATE</text>
        <text x="1426" y="217" font-size="6.5" letter-spacing="-.3">APPROVED</text>
      </g>

      <g transform="translate(1040 180) scale(.33333)">
        ${ISO_H.map((d) => svg`<path d=${d} fill="none" stroke="#111" stroke-width="1.8"/>`)}
        ${ISO_L.map((d) => svg`<path d=${d} fill="none" stroke="#333" stroke-width="1"/>`)}
      </g>

      <g transform="translate(410 290) scale(.36995 .33333)">
        ${SIDE.map((d) => svg`<path d=${d} fill="none" stroke="#111" stroke-width="1.7"/>`)}
        <path d="M75 92H919M90 263H905M1220 263H1485" fill="none" stroke="#444" stroke-width="1.2" stroke-dasharray="7 4"/>
      </g>

      <g transform="translate(420 580) scale(.33333)">
        ${BOTTOM.map((d) => svg`<path d=${d} fill="none" stroke="#111" stroke-width="1.7"/>`)}
        <path d="M50 147H992" fill="none" stroke="#444" stroke-width="1.3" stroke-dasharray="7 4"/>
      </g>

      <g transform="translate(860 460) scale(.36995 .33333)">
        ${DIM.map((d) => svg`<path d=${d} fill="none" stroke="#2222e6" stroke-width="1.1"/>`)}
        ${DIM_A.map(([x, y, a, b]) => svg`<path d="M${x} ${y}L${x + a * 16} ${y + b * 14}" fill="none" stroke="#2222e6" stroke-width="2.6"/>`)}
        <path d=${FLAT} fill="none" stroke="#111" stroke-width="1.9"/>
        ${CENTER.map((d) => svg`<path d=${d} fill="none" stroke="#555" stroke-width="1.2" stroke-dasharray="46 5 4 5"/>`)}
      </g>
      <g font-family="Open Sans" font-size="12" fill="#2222e6" text-anchor="middle">
        <text x="975" y="478.5">45,83</text>
        <text x="1350" y="478.5">45,83</text>
        <text x="1161.5" y="829">323,3</text>
        <text transform="translate(882 653) rotate(-90)">194,95</text>
        <text transform="translate(1407 552) rotate(-90)">45,83</text>
        <text transform="translate(1407 722) rotate(-90)">41,65</text>
        <text transform="translate(1407 767) rotate(-90)">25,83</text>
      </g>

      <g transform="translate(960 820) scale(.33333)">
        ${TB_H.map((d) => svg`<path d=${d} fill="none" stroke="#111" stroke-width="1.8"/>`)}
        ${TB_DOT.map((d) => svg`<path d=${d} fill="none" stroke="#aaa" stroke-width=".8" stroke-dasharray="2 1.5"/>`)}
        <path d="M88 292L190 277V340L88 320Z" fill="none" stroke="#222" stroke-width="1.1"/>
        <circle cx="235" cy="307" r="31" fill="none" stroke="#222" stroke-width="1.1"/>
        <circle cx="235" cy="307" r="12" fill="none" stroke="#222" stroke-width="1.1"/>
        <path d="M80 306H200M192 307H282M235 260V355" fill="none" stroke="#35e035" stroke-width="1"/>
      </g>
      <g font-family="Liberation Sans">
        ${TB_LAB.map(([x, y, t]) => svg`<text x=${960 + x / 3} y=${820 + y / 3} font-size="3.4" fill="#666" text-anchor="end">${t}</text>`)}
        <text x="1064.3" y="912.5" font-size="5.7" fill="#333">E' vietata la riproduzione e la</text>
        <text x="1064.3" y="925.5" font-size="5.7" fill="#333">consegna a terzi del presente</text>
        <text x="1064.3" y="938.5" font-size="5.7" fill="#333">disegno senza Nostra autorizzazione</text>
      </g>
      <g font-family="Open Sans">
        <text x="1321" y="851" font-size="13" fill="#6b1b3a" letter-spacing="-.85">Mario Rosssi spa</text>
        <text x="1175.5" y="866.5" font-size="8.5" fill="#333" letter-spacing="-.5">A3</text>
        <text x="1207" y="872" font-size="13" fill="#222" letter-spacing=".05">06/06/20</text>
        <text x="1175" y="937" font-size="12.5" fill="#2222e6">1,869 kg</text>
        <text x="1422" y="934" font-size="10" fill="#333">0</text>
      </g>
    `;
  }

  private bigCol(c: any) {
    return html`<div class="big ${c.sel ? 'sel' : ''}" style="width:${c.w}px">
      ${ic(c.s, 24, BIG[c.icon])}
      <div class="tx">${c.lines.map((l: string) => html`<span>${l}</span>`)}</div>
    </div>`;
  }
  private col(c: any) {
    if (c.t === 'big') return this.bigCol(c);
    if (c.t === 'sp') return html`<div class=${c.line ? 'vsep' : ''} style="width:${c.w}px;flex:none"></div>`;
    if (c.t === 'small') return html`<div class="small" style="width:${c.w}px">${c.icons.map((k: string) => html`<div class="r">${ic(13, 14, SM[k])}</div>`)}</div>`;
    return html`<div class="list" style="width:${c.w}px;padding-left:${c.pad}px">${c.items.map((it: any) => html`<div class="r ${it[2] ? 'dim' : ''}">${ic(12, 14, SM[it[0]])}<span>${it[1]}</span></div>`)}</div>`;
  }
  private cells(cs: string[]) {
    return cs.map((c) => {
      if (c === 'exp') return html`<div class="cw"><div class="box"></div></div>`;
      if (c === 'pexp') return html`<div class="cw xv"><div class="box p"></div></div>`;
      return html`<div class="cw ${c}"></div>`;
    });
  }

  render() {
    const rows = [
      { c: ['exp'], i: 'sheet', t: 'Foglio1' },
      { c: ['', 'exp'], i: 'layer', t: 'Livelli' },
      { c: ['', 'v', 'l'], i: 'pen', t: 'Default', b: 1 },
      { c: ['', 'v', 'l'], i: 'red', t: '0' },
      { c: ['', 'v', 'e'], i: 'layer', t: 'Auto - Hide' },
      { c: ['', 'exp'], i: 'views', t: 'Viste di disegno' },
      { c: ['', '', 'pexp'], i: 'view', t: 'Principale' },
      { c: ['', '', 'pexp'], i: 'view', t: 'Principale' },
      { c: ['', '', 'pexp'], i: 'view', t: 'Pittoriale' },
      { c: ['', '', 'pexp'], i: 'view', t: 'Principale' },
      { c: ['', '', 'pexp'], i: 'view', t: 'Principale' },
    ];
    return html`<div class="app">
      <div class="top">
        <div class="logo">
          <svg class="i" width="29" height="29" viewBox="0 0 29 29"><rect x="1" y="1" width="27" height="27" rx="4" fill="#fff" stroke="#1f9fc6" stroke-width="1.6"/><path d="M7 7L17 17" stroke="#20a5cc" stroke-width="5" fill="none"/><path d="M20 6V21.5H10" stroke="#1968b5" stroke-width="5" fill="none"/></svg>
        </div>
        <div class="toprows">
          <div class="row1">
            ${QAT.map(([w, c]) => html`<div class="cell" style="width:${w}px">${c}</div>`)}
            <div class="title">Sync3D - Draft - [Draft1]</div>
            <div class="ctrl">${WIN1.map(([w, c]) => html`<div class="cell" style="width:${w}px">${c}</div>`)}</div>
          </div>
          <div class="row2">
            <div class="tab on" style="width:42px">Home</div>
            ${TABS.map(([t, w]) => html`<div class="tab" style="width:${w}px">${t}</div>`)}
            <div class="ctrl">${WIN2.map(([w, c]) => html`<div class="cell" style="width:${w}px">${c}</div>`)}</div>
          </div>
        </div>
      </div>

      <div class="ribbon">
        ${GROUPS.map((g) => html`<div class="group" style="width:${g.w}px">
          <div class="cols">${g.cols.map((c) => this.col(c))}</div>
          <div class="glabel">${g.label}</div>
        </div>`)}
      </div>

      <div class="doctabs">
        <div class="dicon">${ic(14, 14, [fl('M2 0h9v14H2z', '#2a78bd', '#17538c'), fl('M4 12l3-5 3 5z', '#f0c030')])}</div>
        <div class="dtab on">${ic(13, 14, doc('#2a86cf'))}<span>Draft1</span><span class="dx">✕</span></div>
        <div class="dtab off">${ic(13, 14, doc('#2a86cf'))}<span>Parte2</span><span class="dx">✕</span></div>
        <div class="dright">
          ${ic(8, 8, st('M6 1L2 4l4 3', '#999', 1))}${ic(8, 8, st('M2 1l4 3-4 3', '#999', 1))}${ic(8, 8, fl('M1 3h6L4 7z', '#777'))}
          <span>✕</span>
        </div>
        <div class="helpc">${ic(16, 16, [ci(8, 8, 7, '#1163c0', '#0d4d96'), svg`<text x="5" y="12" font-size="11" font-weight="700" fill="#fff" font-family="Liberation Sans">?</text>`])}</div>
      </div>

      <div class="work">
        <div class="panel">
          <div class="phead">Livelli
            <div class="pctl">
              ${ic(9, 10, fl('M1 1h8v2H1zM1 4h8L5 9z', '#222'))}
              ${ic(9, 10, [fl('M3 0h4v5H3z', '#333'), st('M5 5v5', '#333', 1), st('M2 5h6', '#333', 1)])}
              ${ic(9, 10, st('M1 1l8 8M9 1L1 9', '#111', 1.6))}
            </div>
          </div>
          <div class="ptabs">
            <div class="ptab">${ic(20, 18, [fl('M3 1h9v13H3z', '#2a5f9e', '#173f70'), fl('M6 3h7v13H6z', '#2a86cf', '#17538c'), fl('M8 16l4-6 5 6z', '#f0c030', '#a07c10')])}</div>
            <div class="ptab">${ic(19, 18, [st('M3 3h12v12H3z', '#e8732a', 1), fl('M6 6h7v7H6z', '#1f8fc8', '#17538c'), fl('M8 8h3v3H8z', W)])}</div>
            <div class="ptab on">${ic(20, 18, [st('M5 3h12l-4 4H1zM5 7.5h12l-4 4H1zM5 12h12l-4 4H1z', '#2a9dc4', 1.1), st('M5 5l7-1', R, .9)])}</div>
            <div class="ptab">${ic(20, 18, [fl('M3 3h7v13H3z', '#f0b429', '#b98512'), fl('M10 1h6v15h-6z', '#f08040', '#b85018'), svg`<text x="5" y="15" font-size="13" font-weight="700" fill="#1f63b5" font-family="Liberation Sans">?</text>`])}</div>
          </div>
          <div class="ptools">
            <div class="ptool s">${ic(16, 16, [st('M4 5h10l-3 5H1z', '#5a7cc8', 1), fl('M4 6h8l-2 3H2z', '#fadfd8'), fl('M3 2l2 2-2 1z', R)])}</div>
            <div class="ptool">${ic(16, 16, [fl('M2 2l5 3-5 3z', '#3b5cc0'), st('M5 7h9l-3 4H2zM5 10h9l-3 4H2z', '#6677b8', 1)])}</div>
            <div class="ptool">${ic(16, 16, [fl('M2 2l5 3-5 3z', '#8e95d8'), st('M5 7h9l-3 4H2zM5 10h9l-3 4H2z', '#bbb', 1)])}</div>
            <div class="ptool g" style="border-color:#c8c8c8">${ic(16, 16, [st('M5 3h8l-2 4H3zM5 9h8l-2 4H3z', W, 1.1), st('M13 5v4', '#333', 1)])}</div>
          </div>
          <div class="tree">
            ${rows.map((r) => html`<div class="tr">${this.cells(r.c)}<span class="ti">${TI[r.i]}</span>${r.b ? html`<b>${r.t}</b>` : html`<span>${r.t}</span>`}</div>`)}
          </div>
        </div>

        <div class="canvas">
          <svg class="draw" width="1702" height="878" viewBox="198 125 1702 878">${this.draw()}</svg>
          <div class="fence">
            ${FENCE.map((f) => {
              if (f[0] === 'g') return html`<div style="width:${f[1]}px;flex:none"></div>`;
              if (f[0] === 'c') return html`<div class="combo"><span>Fence direzionale</span>${ic(8, 8, st('M1 3l3 3 3-3', '#555', 1))}</div>`;
              return html`<div class="fb ${f[3] || ''}" style="width:${f[1]}px">${f[2]}</div>`;
            })}
          </div>
        </div>
        <div class="rail"><div class="railt">Informazioni su Sync3D</div></div>
      </div>

      <div class="sheets">
        <div class="sl">
          <div class="nav">◂</div><div class="nav">◂</div><div class="nav">▸</div><div class="nav">▸</div>
          ${ic(7, 7, st('M1 0l5 7', '#333', 1))}
          <span class="st">Superficie 1</span>
          ${ic(20, 13, [st('M3 13L5 1h7l-1 12', '#333', .9), fl('M5 3h5v8H5z', '#e8a090'), fl('M6 4h3v5H6z', '#3a5fc0')])}
        </div>
        <div class="sr"></div>
        <div class="se"></div>
      </div>

      <div class="prompt">
        <div class="pb">${ic(16, 10, [fl('M0 1h10v8H0z', '#2a78bd'), st('M2 5h1M4.5 5h1M7 5h1', W, 1)])}<span>PromptBar</span></div>
        <div class="pf">Fare clic sugli elementi, trascinare verso destra per il fence interno, trascinare verso sinistra per il fence interno/sovrapposto oppure premere il tasto Alt e fare clic per posizionare il primo vertice del fence poligonale.</div>
        <div class="pr">
          <span style="font-family:'Liberation Serif';font-weight:700;font-size:12px">A</span><span style="font-family:'Liberation Serif';font-weight:700;font-size:10px">A</span>
          ${ic(8, 10, st('M1 5l3-3 3 3M1 9l3-3 3 3', '#333', 1))}
          ${ic(8, 10, fl('M0 1h8v2H0zM0 4h8L4 9z', '#333'))}
          ${ic(8, 10, [fl('M2 0h4v6H2z', '#444'), st('M4 6v4', '#444', 1)])}
          ${ic(8, 10, st('M1 1l6 8M7 1L1 9', '#222', 1.2))}
        </div>
      </div>

      <div class="status">
        <div class="find">Trova comando</div>
        <div class="sc">${ic(13, 14, [st('M2 11c0-4 3-6 7-6', W, 2.2), fl('M8 1l5 4-5 4z', W)])}</div>
        <div class="sc">${ic(13, 14, [fl('M1 1h12v12H1z', '#cfe4f7', W, 1), ...mag(6, 6, 3)])}</div>
        <div class="sc">${ic(13, 14, mag(6, 5, 4))}</div>
        <div class="sc">${ic(13, 14, [fl('M7 0L4 6h3L5 11l6-7H8z', '#f4c430'), ...mag(5, 8, 2.5)])}</div>
        <div class="sc">${ic(13, 14, [fl('M1 1h12v12H1z', '#1f4fa0', W, 1), st('M3 3l8 8M11 3l-8 8', W, 1.6)])}</div>
        <div class="sc">${ic(13, 14, [fl('M1 1h12v12H1z', '#2f78c0'), fl('M4 3h6v4H4z', '#c7a98a'), fl('M3 8h8v5H3z', '#a98a6c')])}</div>
        <div class="sc">${ic(13, 14, [ci(7, 7, 6, '#e8eef4', '#6a7f92'), st('M4 7h6', '#222', 1.6)])}</div>
        <div class="slider"><div class="thumb"></div></div>
        <div class="sc" style="width:15px">${ic(13, 14, [ci(7, 7, 6, '#e8eef4', '#6a7f92'), st('M4 7h6M7 4v6', '#222', 1.6)])}</div>
        <div class="sc">${ic(14, 14, ci(7, 7, 6, '#e8202a', '#f4b0b0', 1))}</div>
        <div class="sc">${ic(14, 14, [fl('M7 1l5 6H9v4H5V7H2z', '#22b52a'), fl('M3 12h8v2H3z', '#d88a80')])}</div>
      </div>

      <div class="task">
        <div class="winb">${ic(14, 14, fl('M0 2l6-1v5.5H0zM7 1l7-1v6.5H7zM0 7.5h6V13l-6-1zM7 7.5h7V14l-7-1z', '#fff'))}</div>
        <div class="search">${ic(14, 14, [ci(8.5, 5.5, 4.5, 'none', '#333', 1.1), st('M5 9l-4 4', '#333', 1.2)])}<span>Scrivi qui per eseguire la ricerca</span></div>
        <div class="tk" style="width:37px">${ic(13, 14, ci(7, 7, 5.5, 'none', '#fff', 1.6))}</div>
        <div class="tk" style="width:35px">${ic(14, 14, [st('M3 2.5h8v9H3z', '#fff', 1), st('M0.5 3v8M13.5 3v8', '#fff', 1), st('M3 1h8M3 13h8', '#fff', .9)])}</div>
        <div class="tkapp"><svg class="i" width="20" height="20" viewBox="0 0 29 29"><path d="M7 7L17 17" stroke="#20b5dc" stroke-width="5" fill="none"/><path d="M20 6V21.5H10" stroke="#1d8fdc" stroke-width="5" fill="none"/></svg></div>
        <div class="tray">
          <div class="tk" style="width:18px">${ic(10, 10, st('M1 7l4-4 4 4', '#fff', 1.2))}</div>
          <div class="tk" style="width:18px">${ic(13, 12, fl('M3 10a3 3 0 0 1 0-6c1-3 6-3 7 0a3 3 0 0 1 1 6z', '#fff'))}</div>
          <div class="tk" style="width:18px">${ic(13, 14, [st('M3 1h10v8H3z', '#fff', 1), st('M1 4v8M6 9v3M3 12h6', '#fff', 1)])}</div>
          <div class="tk" style="width:18px">${ic(13, 14, [fl('M1 5h2l3-3v10L3 9H1z', 'none', '#ccc', 1), st('M8 4c1 2 1 4 0 6M10 3c2 2 2 6 0 8', '#888', 1)])}</div>
          <div class="tk" style="width:28px">ITA</div>
          <div class="clock"><span>14:12</span><span>13/11/2020</span></div>
          <div class="tk" style="width:32px">${ic(18, 18, [fl('M2 1h11v11H2z', '#f0f0f0'), st('M4 4h7M4 6.5h7M4 9h7', '#555', 1), ci(13, 13, 4.5, '#2a2a2a', '#bbb', .7), svg`<text x="11.4" y="15.5" font-size="7" fill="#fff" font-family="Liberation Sans">1</text>`])}</div>
          <div style="width:10px;flex:none"></div>
        </div>
      </div>
    </div>`;
  }
}
